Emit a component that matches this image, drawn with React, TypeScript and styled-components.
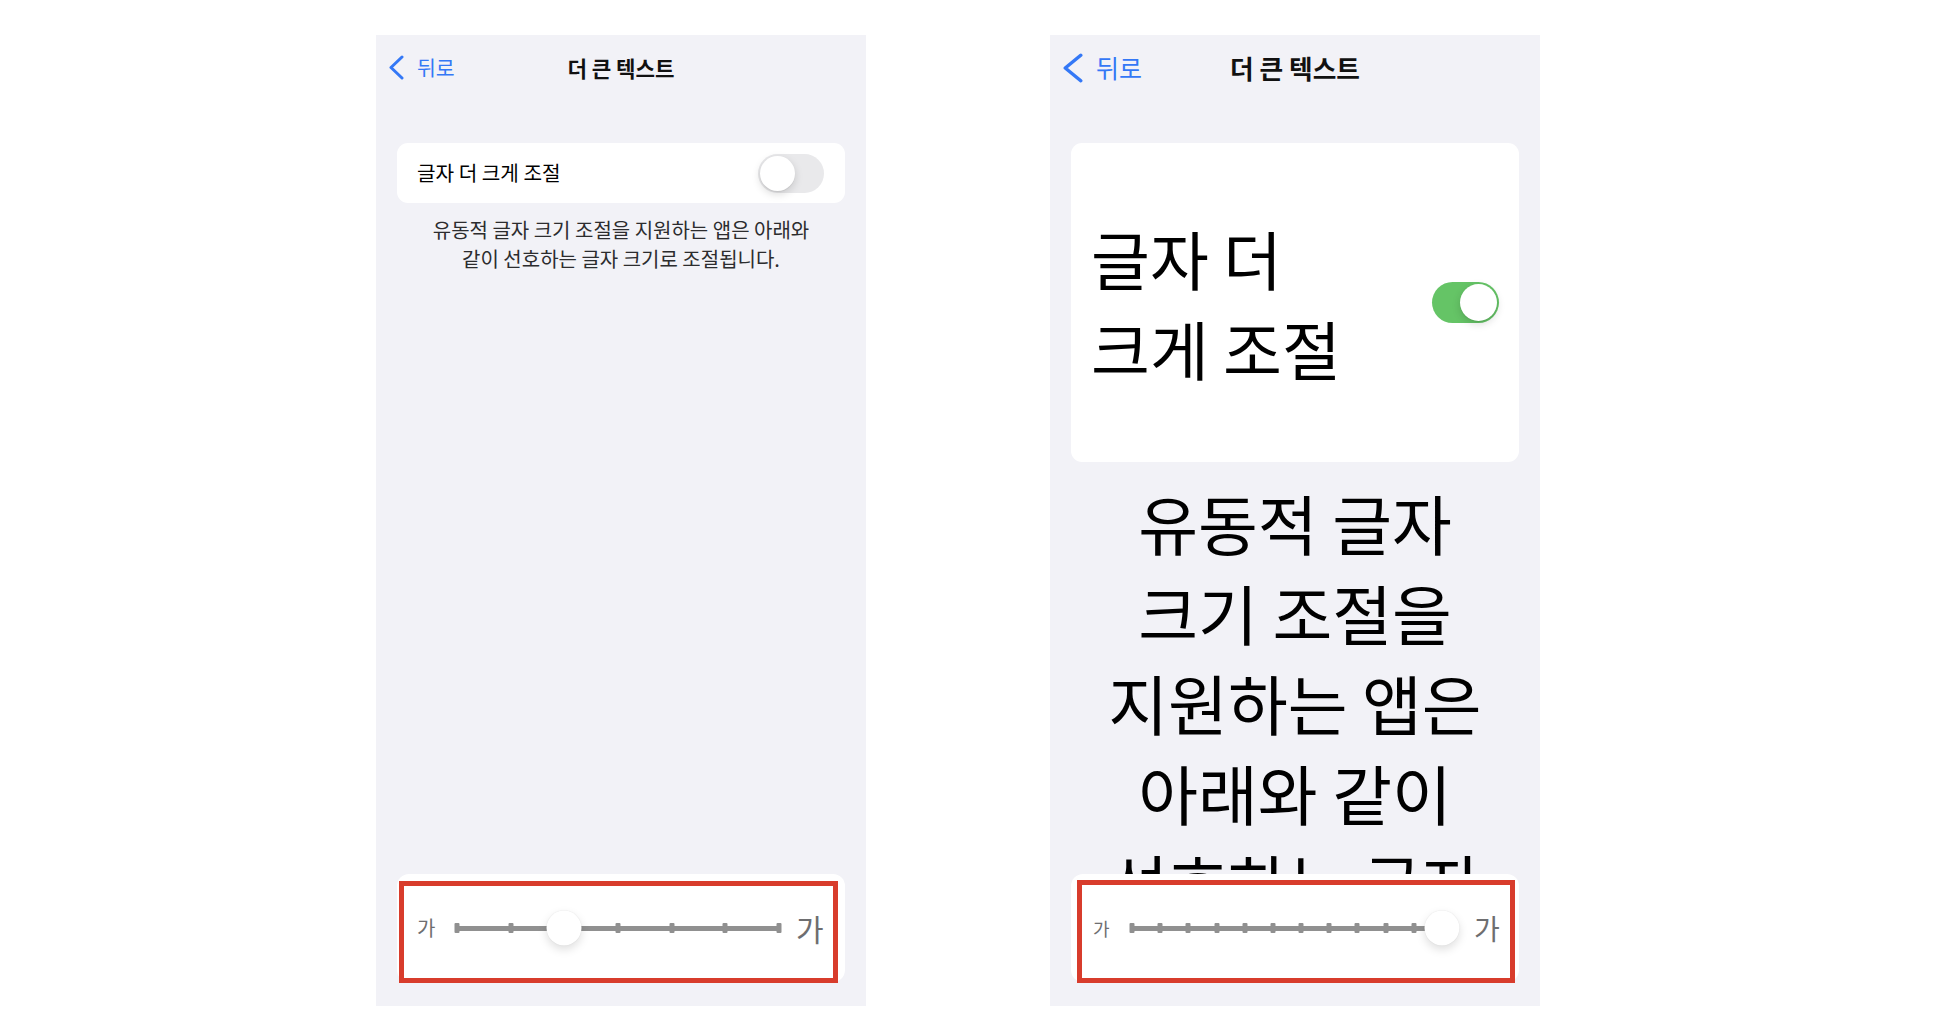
import React from "react";
import styled, { createGlobalStyle } from "styled-components";

const GlobalStyle = createGlobalStyle`
  html, body { margin: 0; padding: 0; background: #ffffff; }
  body { font-family: "Noto Sans CJK KR", "Noto Sans", sans-serif; }
  * { box-sizing: border-box; }
`;

const Page = styled.div`
  display: flex;
  gap: 184px;
  padding: 35px 0 0 376px;
  height: 1028px;
  background: #ffffff;
`;

const Phone = styled.div`
  width: 490px;
  height: 971px;
  background: #f2f2f7;
  display: flex;
  flex-direction: column;
  overflow: hidden;
`;

const NavBar = styled.div`
  height: 65px;
  flex: none;
  display: grid;
  grid-template-columns: 1fr auto 1fr;
  align-items: center;
  padding: 0 13px;
`;

const BackButton = styled.div<{ $size: number }>`
  display: flex;
  align-items: center;
  gap: 13px;
  color: #3478f6;
  font-size: ${(p) => p.$size}px;
  line-height: 1;
`;

const NavTitle = styled.div<{ $size: number }>`
  font-size: ${(p) => p.$size}px;
  font-weight: 700;
  color: #111111;
  line-height: 1;
`;

const Content = styled.div`
  flex: 1;
  min-height: 0;
  overflow: hidden;
  padding: 43px 21px 0;
`;

const Card = styled.div<{ $pad: string; $minH: number }>`
  background: #ffffff;
  border-radius: 11px;
  display: flex;
  align-items: center;
  justify-content: space-between;
  padding: ${(p) => p.$pad};
  min-height: ${(p) => p.$minH}px;
`;

const Label = styled.div<{ $size: number; $lh: number; $maxW: number }>`
  font-size: ${(p) => p.$size}px;
  line-height: ${(p) => p.$lh}px;
  max-width: ${(p) => p.$maxW}px;
  word-break: keep-all;
  color: #000000;
`;

const ToggleTrack = styled.div<{ $on: boolean; $w: number; $h: number }>`
  position: relative;
  flex: none;
  width: ${(p) => p.$w}px;
  height: ${(p) => p.$h}px;
  border-radius: ${(p) => p.$h / 2}px;
  background: ${(p) => (p.$on ? "#65c466" : "#e9e9eb")};
`;

const ToggleKnob = styled.span<{ $on: boolean; $h: number }>`
  position: absolute;
  top: 2px;
  ${(p) => (p.$on ? "right: 2px;" : "left: 2px;")}
  width: ${(p) => p.$h - 4}px;
  height: ${(p) => p.$h - 4}px;
  border-radius: 50%;
  background: #ffffff;
  box-shadow: 0 3px 8px rgba(0, 0, 0, 0.15), 0 1px 1px rgba(0, 0, 0, 0.06);
`;

const Footer = styled.p<{ $size: number; $lh: number; $mt: number; $color: string }>`
  margin: ${(p) => p.$mt}px auto 0;
  max-width: 395px;
  text-align: center;
  word-break: keep-all;
  font-size: ${(p) => p.$size}px;
  line-height: ${(p) => p.$lh}px;
  color: ${(p) => p.$color};
`;

const Dock = styled.div`
  flex: none;
  padding: 0 21px 24px;
`;

const SliderCard = styled.div<{ $padL: number; $padR: number }>`
  position: relative;
  height: 108px;
  background: #ffffff;
  border-radius: 12px;
  display: flex;
  align-items: center;
  padding: 0 ${(p) => p.$padR}px 0 ${(p) => p.$padL}px;
`;

const Ga = styled.span<{ $size: number; $w: number }>`
  flex: none;
  width: ${(p) => p.$w}px;
  font-size: ${(p) => p.$size}px;
  line-height: 1;
  white-space: nowrap;
  color: #6e6e70;
`;

const Track = styled.div<{ $ml: number; $mr: number }>`
  position: relative;
  flex: 1;
  height: 5px;
  background: #909090;
  margin: 0 ${(p) => p.$mr}px 0 ${(p) => p.$ml}px;
`;

const Tick = styled.span`
  position: absolute;
  top: 50%;
  width: 5px;
  height: 10px;
  border-radius: 1px;
  background: #909090;
  transform: translate(-50%, -50%);
`;

const SliderKnob = styled.span`
  position: absolute;
  top: 50%;
  width: 35px;
  height: 35px;
  border-radius: 50%;
  background: #ffffff;
  transform: translate(-50%, -50%);
  box-shadow: 0 4px 10px rgba(0, 0, 0, 0.13), 0 0 1px rgba(0, 0, 0, 0.12);
`;

const Annotation = styled.div<{ $t: number; $l: number; $r: number; $b: number }>`
  position: absolute;
  top: ${(p) => p.$t}px;
  left: ${(p) => p.$l}px;
  right: ${(p) => p.$r}px;
  bottom: ${(p) => p.$b}px;
  border: 5px solid #d83c2c;
  pointer-events: none;
`;

const Chevron: React.FC<{ w: number; h: number; sw: number }> = ({ w, h, sw }) => (
  <svg width={w} height={h} viewBox={`0 0 ${w} ${h}`} fill="none">
    <polyline
      points={`${w - sw / 2 - 0.5},${sw / 2 + 0.5} ${sw / 2 + 0.5},${h / 2} ${w - sw / 2 - 0.5},${h - sw / 2 - 0.5}`}
      stroke="#3478f6"
      strokeWidth={sw}
      strokeLinecap="round"
      strokeLinejoin="round"
    />
  </svg>
);

type PhoneProps = {
  nav: { back: number; title: number; chevW: number; chevH: number; sw: number };
  card: { pad: string; minH: number; size: number; lh: number; maxW: number };
  toggle: { on: boolean; w: number; h: number };
  footer: { size: number; lh: number; mt: number; color: string };
  slider: {
    padL: number;
    padR: number;
    small: number;
    smallW: number;
    big: number;
    bigW: number;
    ml: number;
    mr: number;
    stops: number;
    value: number;
    ann: { t: number; l: number; r: number; b: number };
  };
};

const FOOTER_TEXT =
  "유동적 글자 크기 조절을 지원하는 앱은 아래와 같이 선호하는 글자 크기로 조절됩니다.";

const SettingsPhone: React.FC<PhoneProps> = ({ nav, card, toggle, footer, slider }) => {
  const ticks = Array.from({ length: slider.stops }, (_, i) => i);
  return (
    <Phone>
      <NavBar>
        <BackButton $size={nav.back}>
          <Chevron w={nav.chevW} h={nav.chevH} sw={nav.sw} />
          <span>뒤로</span>
        </BackButton>
        <NavTitle $size={nav.title}>더 큰 텍스트</NavTitle>
        <span />
      </NavBar>
      <Content>
        <Card $pad={card.pad} $minH={card.minH}>
          <Label $size={card.size} $lh={card.lh} $maxW={card.maxW}>
            글자 더 크게 조절
          </Label>
          <ToggleTrack $on={toggle.on} $w={toggle.w} $h={toggle.h}>
            <ToggleKnob $on={toggle.on} $h={toggle.h} />
          </ToggleTrack>
        </Card>
        <Footer $size={footer.size} $lh={footer.lh} $mt={footer.mt} $color={footer.color}>
          {FOOTER_TEXT}
        </Footer>
      </Content>
      <Dock>
        <SliderCard $padL={slider.padL} $padR={slider.padR}>
          <Ga $size={slider.small} $w={slider.smallW}>가</Ga>
          <Track $ml={slider.ml} $mr={slider.mr}>
            {ticks.map((i) => (
              <Tick key={i} style={{ left: `${(i / (slider.stops - 1)) * 100}%` }} />
            ))}
            <SliderKnob style={{ left: `${(slider.value / (slider.stops - 1)) * 100}%` }} />
          </Track>
          <Ga $size={slider.big} $w={slider.bigW}>가</Ga>
          <Annotation $t={slider.ann.t} $l={slider.ann.l} $r={slider.ann.r} $b={slider.ann.b} />
        </SliderCard>
      </Dock>
    </Phone>
  );
};

export default function App() {
  return (
    <>
      <GlobalStyle />
      <Page>
        <SettingsPhone
          nav={{ back: 20.5, title: 21.2, chevW: 15, chevH: 25, sw: 3 }}
          card={{ pad: "0 21px 0 20px", minH: 60, size: 20.2, lh: 28, maxW: 300 }}
          toggle={{ on: false, w: 66, h: 39 }}
          footer={{ size: 20, lh: 29, mt: 12, color: "#2c2c2e" }}
          slider={{
            padL: 20,
            padR: 21,
            small: 20,
            smallW: 19,
            big: 30,
            bigW: 28,
            ml: 21,
            mr: 17,
            stops: 7,
            value: 2,
            ann: { t: 7, l: 2, r: 7, b: -1 },
          }}
        />
        <SettingsPhone
          nav={{ back: 25, title: 25.7, chevW: 20, chevH: 30, sw: 3.5 }}
          card={{ pad: "69px 20px 70px 20px", minH: 319, size: 64, lh: 90, maxW: 280 }}
          toggle={{ on: true, w: 67, h: 41 }}
          footer={{ size: 65, lh: 90, mt: 15, color: "#000000" }}
          slider={{
            padL: 22,
            padR: 19,
            small: 18,
            smallW: 17,
            big: 28,
            bigW: 26,
            ml: 22,
            mr: 32,
            stops: 12,
            value: 11,
            ann: { t: 6, l: 6, r: 4, b: -1 },
          }}
        />
      </Page>
    </>
  );
}
